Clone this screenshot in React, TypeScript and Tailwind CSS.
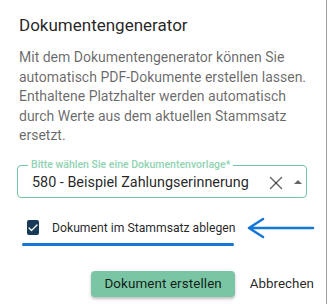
import { Check, X } from 'lucide-react';

export default function App() {
  return (
    <div className="flex h-[304px] w-[330px] bg-white" style={{ fontFamily: 'Roboto, "Liberation Sans", sans-serif' }}>
      <div className="h-full w-[327px] border-r border-[#9e9e9e]">
        <div className="px-[19px] pt-[14px]">
          <h2 className="text-[17px] leading-[22px] font-normal text-black/[0.87]">Dokumentengenerator</h2>
          <p className="mt-[12px] text-[14px] leading-[19.6px] text-black/[0.6]">
            Mit dem Dokumentengenerator können Sie automatisch PDF-Dokumente erstellen lassen. Enthaltene Platzhalter werden automatisch durch Werte aus dem aktuellen Stammsatz ersetzt.
          </p>

          <div className="relative mt-[19px] ml-[-2px] flex h-[33px] w-[290px] items-center rounded border border-[#72c6a1] pl-[14px] pr-[3px]">
            <span className="absolute left-[10px] top-[-7px] bg-white px-[3px] text-[10.5px] leading-[12px] font-medium whitespace-nowrap text-[#8fd3b2]">
              Bitte wählen Sie eine Dokumentenvorlage*
            </span>
            <span className="mt-[3px] flex-1 whitespace-nowrap text-[14.4px] leading-[20px] text-black/[0.87]">580 - Beispiel Zahlungserinnerung</span>
            <X size={22} strokeWidth={1.5} className="mt-[3px] text-black/[0.6]" />
            <svg width="8" height="4" viewBox="0 0 8 4" className="ml-[7px] mr-[1px] mt-[1px]">
              <path d="M0 4 L4 0 L8 4 Z" fill="rgba(0,0,0,0.6)" />
            </svg>
          </div>

          <div className="mt-[15px] flex h-[30px] items-center">
            <div className="ml-[8px] flex h-[15px] w-[15px] items-center justify-center rounded-[2px] bg-[#173a59]">
              <Check size={12} strokeWidth={2.6} className="text-white" />
            </div>
            <span className="ml-[13px] whitespace-nowrap text-[12.2px] leading-[16px] text-black/[0.87]">Dokument im Stammsatz ablegen</span>
            <svg width="70" height="24" viewBox="0 0 70 24" className="ml-[10px] shrink-0">
              <path d="M3 12 L67 12 M3 12 L17 3 M3 12 L17 21" stroke="#1577d8" strokeWidth="2.6" strokeLinecap="round" fill="none" />
            </svg>
          </div>
          <div className="ml-[3px] h-[3px] w-[212px] rounded-full bg-[#1577d8]" />

          <div className="mt-[25px] mr-[-7px] flex items-center justify-end">
            <button className="h-[26px] rounded-[4px] bg-[#7ac5a3] px-[13px] text-[13.4px] font-normal tracking-[0.1px] text-black/[0.87] shadow-[0_2px_3px_rgba(0,0,0,0.25)]">
              Dokument erstellen
            </button>
            <button className="ml-[15px] text-[13.4px] font-normal text-black/[0.87]">Abbrechen</button>
          </div>
        </div>
      </div>
    </div>
  );
}
